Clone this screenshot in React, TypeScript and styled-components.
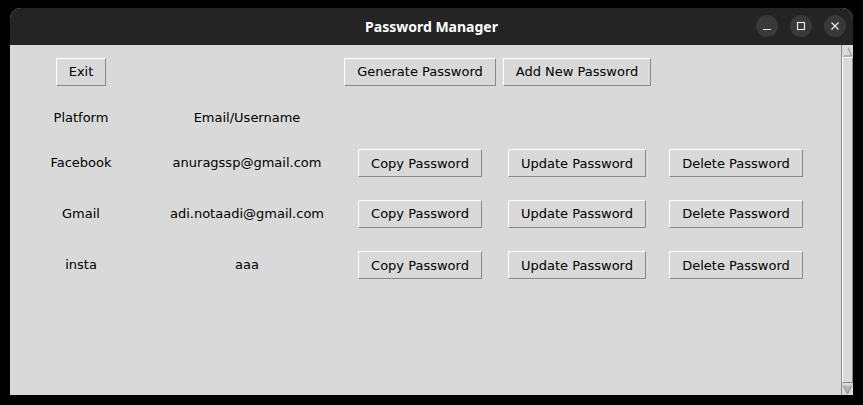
import styled, { createGlobalStyle } from 'styled-components';

const GlobalStyle = createGlobalStyle`
  html, body {
    margin: 0;
    padding: 0;
    background: #000;
  }
  body {
    width: 863px;
    height: 405px;
    overflow: hidden;
  }
`;

const Screen = styled.div`
  padding: 8px 10px 0 10px;
`;

const Window = styled.div`
  width: 843px;
  height: 387px;
  display: flex;
  flex-direction: column;
  border-radius: 11px 11px 0 0;
  overflow: hidden;
  background: #d9d9d9;
`;

const TitleBar = styled.div`
  height: 37px;
  flex: none;
  background: #242424;
  position: relative;
  display: flex;
  align-items: center;
  justify-content: center;
`;

const Title = styled.div`
  color: #ffffff;
  font-family: 'Noto Sans', 'DejaVu Sans', sans-serif;
  font-weight: 700;
  font-size: 14px;
`;

const Controls = styled.div`
  position: absolute;
  right: 7px;
  top: 7px;
  display: flex;
  gap: 12px;
`;

const Ctrl = styled.div`
  width: 22px;
  height: 22px;
  border-radius: 50%;
  background: #393939;
  display: flex;
  align-items: center;
  justify-content: center;
`;

const Body = styled.div`
  flex: 1;
  display: flex;
`;

const Main = styled.div`
  flex: 1;
  padding-top: 8px;
  display: grid;
  grid-template-columns: 142px 190px 156px 158px 160px;
  grid-template-rows: 37px 55px 36px 65px 38px;
  align-content: start;
  align-items: center;
  justify-items: center;
  font-family: 'DejaVu Sans', sans-serif;
  font-size: 13px;
  color: #000;
`;

const Label = styled.div`
  line-height: 16px;
`;

const Spacer = styled.div``;

const Btn = styled.button`
  height: 28px;
  padding: 0 12px;
  background: #d9d9d9;
  border: 1px solid;
  border-color: #ffffff #8a8a8a #8a8a8a #ffffff;
  font-family: 'DejaVu Sans', sans-serif;
  font-size: 13px;
  color: #000;
  white-space: nowrap;
`;

const Scrollbar = styled.div`
  width: 12px;
  flex: none;
  display: flex;
  flex-direction: column;
  border-left: 1px solid #8a8a8a;
  box-sizing: border-box;
  background: #d9d9d9;
`;

const Arrow = styled.div`
  height: 12px;
  flex: none;
  display: flex;
  align-items: center;
  justify-content: center;
`;

const Thumb = styled.div`
  flex: 1;
  border: 1px solid;
  border-color: #ffffff #8a8a8a #8a8a8a #ffffff;
`;

const entries = [
  { platform: 'Facebook', user: 'anuragssp@gmail.com' },
  { platform: 'Gmail', user: 'adi.notaadi@gmail.com' },
  { platform: 'insta', user: 'aaa' },
];

export default function App() {
  return (
    <Screen>
      <GlobalStyle />
      <Window>
        <TitleBar>
          <Title>Password Manager</Title>
          <Controls>
            <Ctrl>
              <svg width="10" height="10" viewBox="0 0 10 10">
                <path d="M1 8.5h8" stroke="#e6e6e6" strokeWidth="1.2" />
              </svg>
            </Ctrl>
            <Ctrl>
              <svg width="10" height="10" viewBox="0 0 10 10">
                <rect x="1.5" y="1.5" width="7" height="7" fill="none" stroke="#e6e6e6" strokeWidth="1.2" />
              </svg>
            </Ctrl>
            <Ctrl>
              <svg width="10" height="10" viewBox="0 0 10 10">
                <path d="M1.5 1.5l7 7M8.5 1.5l-7 7" stroke="#e6e6e6" strokeWidth="1.3" />
              </svg>
            </Ctrl>
          </Controls>
        </TitleBar>
        <Body>
          <Main>
            <Btn>Exit</Btn>
            <Spacer />
            <Btn>Generate Password</Btn>
            <Btn>Add New Password</Btn>
            <Spacer />

            <Label>Platform</Label>
            <Label>Email/Username</Label>
            <Spacer />
            <Spacer />
            <Spacer />

            {entries.map((e) => (
              <>
                <Label key={e.platform + 'p'}>{e.platform}</Label>
                <Label key={e.platform + 'u'}>{e.user}</Label>
                <Btn key={e.platform + 'c'}>Copy Password</Btn>
                <Btn key={e.platform + 'up'}>Update Password</Btn>
                <Btn key={e.platform + 'd'}>Delete Password</Btn>
              </>
            ))}
          </Main>
          <Scrollbar>
            <Arrow>
              <svg width="11" height="11" viewBox="0 0 11 11">
                <path d="M5.5 1L10 10H1z" fill="#d9d9d9" stroke="#8a8a8a" />
                <path d="M5.5 1L1 10" stroke="#fff" />
              </svg>
            </Arrow>
            <Thumb />
            <Arrow>
              <svg width="11" height="11" viewBox="0 0 11 11">
                <path d="M1 1h9L5.5 10z" fill="#b5b5b5" stroke="#8a8a8a" />
                <path d="M1 1h9" stroke="#fff" />
              </svg>
            </Arrow>
          </Scrollbar>
        </Body>
      </Window>
    </Screen>
  );
}
